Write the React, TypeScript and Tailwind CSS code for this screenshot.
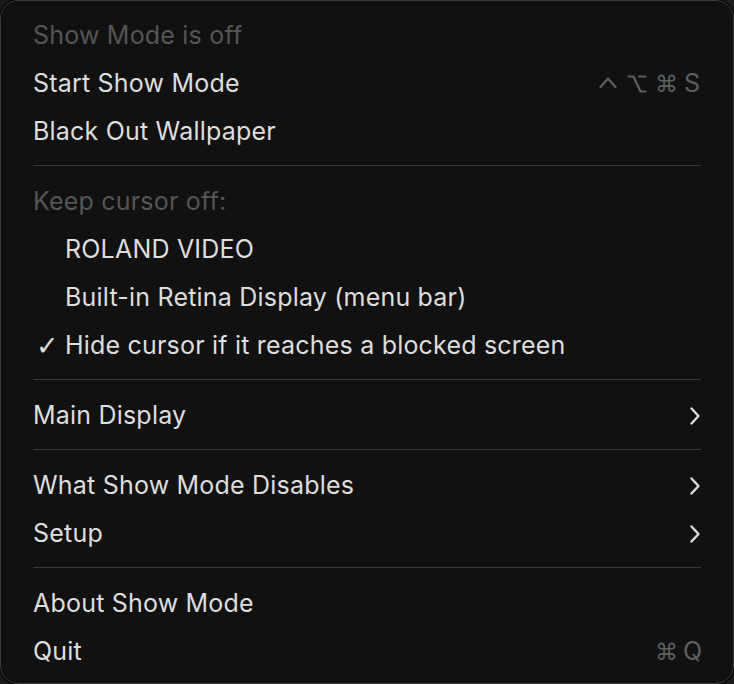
import React from "react";

type Item =
  | { kind: "label"; text: string }
  | { kind: "item"; text: string; indent?: boolean; checked?: boolean; keys?: string[]; submenu?: boolean }
  | { kind: "sep" };

const items: Item[] = [
  { kind: "label", text: "Show Mode is off" },
  { kind: "item", text: "Start Show Mode", keys: ["ctrl", "opt", "⌘", "S"] },
  { kind: "item", text: "Black Out Wallpaper" },
  { kind: "sep" },
  { kind: "label", text: "Keep cursor off:" },
  { kind: "item", text: "ROLAND VIDEO", indent: true },
  { kind: "item", text: "Built-in Retina Display (menu bar)", indent: true },
  { kind: "item", text: "Hide cursor if it reaches a blocked screen", checked: true },
  { kind: "sep" },
  { kind: "item", text: "Main Display", submenu: true },
  { kind: "sep" },
  { kind: "item", text: "What Show Mode Disables", submenu: true },
  { kind: "item", text: "Setup", submenu: true },
  { kind: "sep" },
  { kind: "item", text: "About Show Mode" },
  { kind: "item", text: "Quit", keys: ["⌘", "Q"] },
];

function Chevron() {
  return (
    <svg width="12" height="20" viewBox="0 0 12 20" className="text-[#dadada]">
      <path d="M2.5 2.5 L9.5 10 L2.5 17.5" fill="none" stroke="currentColor" strokeWidth="2.4" strokeLinecap="round" strokeLinejoin="round" />
    </svg>
  );
}

function Keys({ keys }: { keys: string[] }) {
  return (
    <div className="flex items-center gap-[8px] text-[#5e5e5e]">
      {keys.map((k) => {
        if (k === "ctrl") {
          return (
            <svg key={k} width="18" height="20" viewBox="0 0 18 20" className="mr-[2px]">
              <path d="M1.5 13 L9 4.5 L16.5 13" fill="none" stroke="currentColor" strokeWidth="2.2" strokeLinecap="round" strokeLinejoin="round" />
            </svg>
          );
        }
        if (k === "opt") {
          return (
            <svg key={k} width="20" height="20" viewBox="0 0 20 20">
              <path d="M1.5 2.5 H6.5 L13.5 17.5 H18.5 M12 2.5 H18.5" fill="none" stroke="currentColor" strokeWidth="2.2" strokeLinecap="round" strokeLinejoin="round" />
            </svg>
          );
        }
        return (
          <span
            key={k}
            className={
              /[A-Z]/.test(k)
                ? "w-[18px] text-center text-[25px] font-[Inter,sans-serif]"
                : "w-[20px] text-center text-[23px] font-['DejaVu_Sans',sans-serif]"
            }
          >
            {k}
          </span>
        );
      })}
    </div>
  );
}

export default function App() {
  return (
    <div className="min-h-screen bg-[#1b1b1b] font-[Inter,'Noto_Sans',sans-serif]">
      <div className="h-[684px] w-[734px] rounded-[18px] border border-[#3c3c3c] bg-[#111111] px-[32px] pb-[7px] pt-[11px] shadow-[0_0_0_1px_#000]">
        {items.map((item, i) => {
          if (item.kind === "sep") {
            return (
              <div key={i} className="h-[22px] pt-[9px]">
                <div className="h-px w-full bg-[#3a3a3a]" />
              </div>
            );
          }
          if (item.kind === "label") {
            return (
              <div key={i} className="flex h-[48px] items-center text-[25px] tracking-[0.2px] text-[#555555]">
                {item.text}
              </div>
            );
          }
          return (
            <div key={i} className="flex h-[48px] items-center justify-between text-[25px] tracking-[0.2px] text-[#dedede]">
              <div className="flex items-center">
                {item.checked ? (
                  <span className="w-[32px] pl-[3px] font-['DejaVu_Sans',sans-serif] text-[27px] font-bold">✓</span>
                ) : item.indent ? (
                  <span className="w-[32px]" />
                ) : null}
                <span>{item.text}</span>
              </div>
              {item.keys && <Keys keys={item.keys} />}
              {item.submenu && <Chevron />}
            </div>
          );
        })}
      </div>
    </div>
  );
}
